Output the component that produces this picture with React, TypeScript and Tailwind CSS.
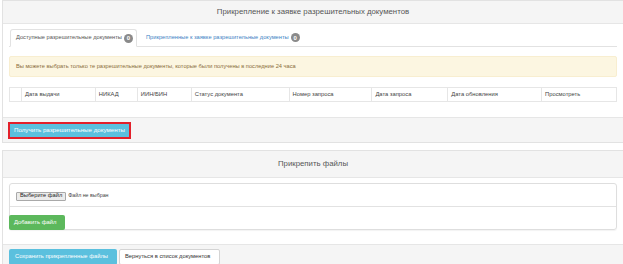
import React from "react";

const cols: { w: number; label: string }[] = [
  { w: 12, label: "" },
  { w: 74, label: "Дата выдачи" },
  { w: 42, label: "НИКАД" },
  { w: 54, label: "ИИН/БИН" },
  { w: 98, label: "Статус документа" },
  { w: 83, label: "Номер запроса" },
  { w: 76, label: "Дата запроса" },
  { w: 94, label: "Дата обновления" },
  { w: 74, label: "Просмотреть" },
];

function Badge() {
  return (
    <span className="inline-flex items-center justify-center w-[9px] h-[9px] rounded-full bg-[#8a8a8a] text-white text-[6px] leading-none font-bold ml-[2px]">
      0
    </span>
  );
}

export default function App() {
  return (
    <div className="w-[623px] h-[264px] overflow-hidden bg-white font-['Liberation_Sans',Arial,sans-serif] text-[#333]">
      {/* Panel 1 */}
      <div className="ml-[2px] border border-r-0 border-[#e2e2e2]">
        <div className="h-[23px] bg-[#f5f5f5] border-b border-[#e6e6e6] flex items-center justify-center text-[7.8px] text-[#555] leading-none">
          Прикрепление к заявке разрешительных документов
        </div>
        <div className="pl-[6px] pr-[6px] pt-[5px] pb-[15px]">
          {/* tabs */}
          <div className="h-[18px] border-b border-[#e2e2e2] flex items-stretch">
            <div className="ml-[1px] w-[127px] -mb-px bg-white border border-[#e2e2e2] border-b-white rounded-t-[3px] pl-[5px] flex items-center text-[5.7px] text-[#555] leading-none whitespace-nowrap">
              Доступные разрешительные документы
              <Badge />
            </div>
            <div className="pl-[9px] flex items-center text-[5.7px] text-[#3c82c4] leading-none whitespace-nowrap">
              Прикрепленные к заявке разрешительные документы
              <Badge />
            </div>
          </div>
          {/* alert */}
          <div className="mt-[9px] h-[21px] bg-[#fcf6e1] border border-[#f8eed0] rounded-[2px] pl-[6px] flex items-center text-[5.7px] text-[#8a6d3b] leading-none whitespace-nowrap">
            Вы можете выбрать только те разрешительные документы, которые были получены в последние 24 часа
          </div>
          {/* table */}
          <div className="mt-[10px] h-[15px] border border-[#e6e6e6] flex">
            {cols.map((c, i) => (
              <div
                key={i}
                className={
                  "h-full flex items-center pl-[3px] text-[5.8px] text-[#444] leading-none whitespace-nowrap " +
                  (i < cols.length - 1 ? "border-r border-[#e6e6e6]" : "")
                }
                style={{ width: c.w }}
              >
                {c.label}
              </div>
            ))}
          </div>
        </div>
        <div className="h-[25px] bg-[#f5f5f5] border-t border-[#e6e6e6] pl-[5px] flex items-center">
          <div className="w-[123px] h-[17px] border-2 border-[#e3202a] bg-[#5bc0de] flex items-center pl-[4px] text-[6.2px] text-white leading-none whitespace-nowrap">
            Получить разрешительные документы
          </div>
        </div>
      </div>

      {/* Panel 2 */}
      <div className="mt-[7px] ml-[2px] border border-r-0 border-b-0 border-[#e2e2e2]">
        <div className="h-[27px] bg-[#f5f5f5] border-b border-[#e6e6e6] flex items-center justify-center text-[7.8px] text-[#555] leading-none">
          Прикрепить файлы
        </div>
        <div className="pl-[6px] pr-[6px] pt-[5px] pb-[14px]">
          <div className="border border-[#dedede] rounded-[3px] shadow-[0_1px_1px_rgba(0,0,0,0.05)]">
            <div className="h-[23px] border-b border-[#e2e2e2] pl-[6px] flex items-center pt-[2px]">
              <div className="h-[9px] px-[3px] bg-[#ececec] border border-[#a9a9a9] rounded-[1px] flex items-center text-[5.7px] text-[#222] leading-none whitespace-nowrap">
                Выберите файл
              </div>
              <span className="ml-[2px] text-[5.3px] text-[#444] leading-none whitespace-nowrap">Файл не выбран</span>
            </div>
            <div className="h-[22px] flex items-end">
              <div className="-ml-px -mb-px w-[56px] h-[15px] bg-[#5cb85c] rounded-[2px] flex items-center pl-[5px] text-[5.9px] text-white leading-none whitespace-nowrap">
                Добавить файл
              </div>
            </div>
          </div>
        </div>
        <div className="h-[40px] bg-[#f5f5f5] border-t border-[#e6e6e6] pl-[6px] pt-[4px] flex items-start gap-[2px]">
          <div className="w-[108px] h-[16px] bg-[#5bc0de] rounded-[2px] flex items-center pl-[6px] text-[5.8px] text-white leading-none whitespace-nowrap">
            Сохранить прикрепленные файлы
          </div>
          <div className="w-[101px] h-[16px] bg-white border border-[#d4d4d4] rounded-[2px] flex items-center pl-[5px] text-[5.8px] text-[#333] leading-none whitespace-nowrap">
            Вернуться в список документов
          </div>
        </div>
      </div>
    </div>
  );
}
